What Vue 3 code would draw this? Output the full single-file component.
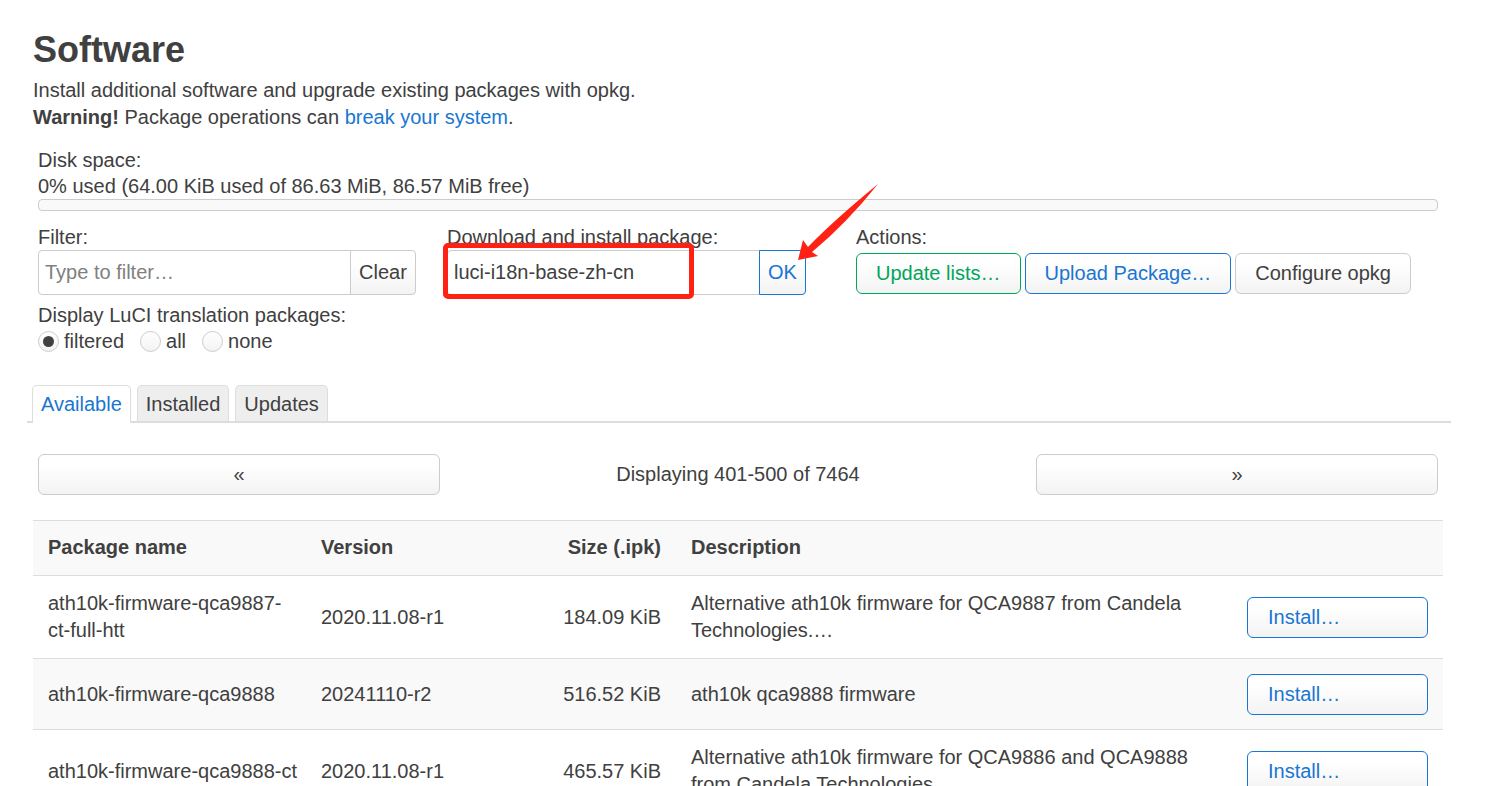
<script setup>
import { ref } from 'vue'

const filter = ref('')
const pkg = ref('luci-i18n-base-zh-cn')
const translations = ref('filtered')
const translationModes = ['filtered', 'all', 'none']
const tabs = ['Available', 'Installed', 'Updates']
const activeTab = ref('Available')

const packages = [
  {
    name: 'ath10k-firmware-qca9887-ct-full-htt',
    version: '2020.11.08-r1',
    size: '184.09 KiB',
    description: 'Alternative ath10k firmware for QCA9887 from Candela Technologies.…',
  },
  {
    name: 'ath10k-firmware-qca9888',
    version: '20241110-r2',
    size: '516.52 KiB',
    description: 'ath10k qca9888 firmware',
  },
  {
    name: 'ath10k-firmware-qca9888-ct',
    version: '2020.11.08-r1',
    size: '465.57 KiB',
    description: 'Alternative ath10k firmware for QCA9886 and QCA9888 from Candela Technologies.…',
  },
]
</script>

<template>
  <main class="page">
    <h2>Software</h2>
    <p class="intro">
      Install additional software and upgrade existing packages with opkg.<br />
      <strong>Warning!</strong> Package operations can <a href="#">break your system</a>.
    </p>

    <section class="controls">
      <div class="disk">
        <div>Disk space:</div>
        <div>0% used (64.00 KiB used of 86.63 MiB, 86.57 MiB free)</div>
        <div class="bar" role="progressbar" aria-label="Disk space" aria-valuenow="0"></div>
      </div>

      <div class="fields">
        <div class="field">
          <label class="label" for="filter">Filter:</label>
          <div class="group">
            <input id="filter" v-model="filter" type="text" placeholder="Type to filter…" />
            <button type="button" class="btn" @click="filter = ''">Clear</button>
          </div>
        </div>
        <div class="field">
          <label class="label" for="package">Download and install package:</label>
          <div class="group">
            <input id="package" v-model="pkg" type="text" />
            <button type="button" class="btn blue">OK</button>
            <div class="highlight"></div>
            <svg class="arrow" width="90" height="84" viewBox="792 180 90 84" aria-hidden="true">
              <path d="M798 260L803 240L808 247Q833 221 878 184Q846 224 812 252L818 256Z" />
            </svg>
          </div>
        </div>
        <div class="field">
          <div class="label">Actions:</div>
          <div class="actions">
            <button type="button" class="btn green">Update lists…</button>
            <button type="button" class="btn blue">Upload Package…</button>
            <button type="button" class="btn">Configure opkg</button>
          </div>
        </div>
      </div>

      <fieldset class="translations">
        <legend class="label">Display LuCI translation packages:</legend>
        <div class="radios">
          <label v-for="mode in translationModes" :key="mode">
            <input v-model="translations" type="radio" name="translations" :value="mode" />
            {{ mode }}
          </label>
        </div>
      </fieldset>
    </section>

    <nav class="tabs">
      <a
        v-for="tab in tabs"
        :key="tab"
        href="#"
        :class="{ active: tab === activeTab }"
        @click.prevent="activeTab = tab"
      >{{ tab }}</a>
    </nav>

    <div class="pager">
      <button type="button" class="btn" aria-label="Previous page">«</button>
      <div>Displaying 401-500 of 7464</div>
      <button type="button" class="btn" aria-label="Next page">»</button>
    </div>

    <table>
      <colgroup>
        <col class="c-name" />
        <col class="c-version" />
        <col class="c-size" />
        <col />
        <col class="c-action" />
      </colgroup>
      <thead>
        <tr>
          <th>Package name</th>
          <th>Version</th>
          <th class="size">Size (.ipk)</th>
          <th>Description</th>
          <th></th>
        </tr>
      </thead>
      <tbody>
        <tr v-for="row in packages" :key="row.name">
          <td class="name">{{ row.name }}</td>
          <td>{{ row.version }}</td>
          <td class="size">{{ row.size }}</td>
          <td>{{ row.description }}</td>
          <td class="action"><button type="button" class="btn blue">Install…</button></td>
        </tr>
      </tbody>
    </table>
  </main>
</template>

<style>
body {
  background: #fff;
}
</style>

<style scoped>
.page {
  box-sizing: border-box;
  padding: 23px 48px 0 33px;
  color: #404040;
  font: 20px/27px "Liberation Sans", Arial, sans-serif;
}
.page *,
.page *::before {
  box-sizing: border-box;
}
h2 {
  margin: 0;
  font-size: 36px;
  line-height: 54px;
}
p {
  margin: 0;
}
a {
  color: #1976d2;
  text-decoration: none;
}
.controls {
  padding: 16px 5px 0;
}
.disk {
  line-height: 26px;
}
.label {
  display: block;
  padding: 0;
  line-height: 25px;
}
.bar {
  height: 12px;
  border: 1px solid #ccc;
  border-radius: 4px;
  background: #f9f9f9;
}
.fields {
  display: grid;
  grid-template-columns: 409fr 409fr 582fr;
  margin-top: 14px;
}
.group {
  position: relative;
  display: flex;
  height: 45px;
}
input[type='text'] {
  width: 313px;
  min-width: 0;
  margin: 0;
  padding: 0 6px;
  border: 1px solid #ccc;
  border-radius: 4px 0 0 4px;
  background: #fff;
  color: #404040;
  font: inherit;
}
input::placeholder {
  color: #808080;
  opacity: 1;
}
.btn {
  height: 41px;
  margin: 0;
  padding: 0 19px;
  border: 1px solid #ccc;
  border-radius: 6px;
  background: linear-gradient(#fff 25%, #f3f3f3);
  color: #404040;
  font: inherit;
  white-space: nowrap;
}
.blue {
  border-color: #1976d2;
  color: #1976d2;
}
.green {
  border-color: #00a65a;
  color: #00a65a;
}
.group .btn {
  height: 45px;
  margin-left: -1px;
  padding: 0 8px;
  border-radius: 0 4px 4px 0;
}
.actions {
  display: flex;
  gap: 4px;
  padding-top: 3px;
}
.highlight {
  position: absolute;
  top: -7px;
  left: -4px;
  width: 251px;
  height: 56px;
  border: 5px solid #ff2114;
  border-radius: 5px;
}
.arrow {
  position: absolute;
  top: -70px;
  left: 345px;
  fill: #ff2114;
}
.translations {
  min-width: 0;
  margin: 8px 0 0;
  padding: 0;
  border: 0;
}
.radios {
  display: flex;
  gap: 16px;
  line-height: 26px;
}
.radios label {
  display: flex;
  align-items: center;
  gap: 5px;
}
input[type='radio'] {
  appearance: none;
  display: grid;
  place-items: center;
  width: 21px;
  height: 21px;
  margin: 0;
  border: 1px solid #ccc;
  border-radius: 50%;
  background: linear-gradient(#fff, #f3f3f3);
}
input[type='radio']:checked::before {
  content: '';
  width: 11px;
  height: 11px;
  border-radius: 50%;
  background: #404040;
}
.tabs {
  display: flex;
  gap: 6px;
  margin: 31px -8px 0 -6px;
  padding-left: 5px;
  border-bottom: 2px solid #ddd;
}
.tabs a {
  height: 36px;
  padding: 0 8px;
  border: 1px solid #ddd;
  border-bottom: 0;
  border-radius: 5px 5px 0 0;
  background: #eee;
  color: #404040;
  line-height: 36px;
}
.tabs .active {
  height: 38px;
  margin-bottom: -2px;
  background: #fff;
  color: #1976d2;
}
.pager {
  display: grid;
  grid-template-columns: 402fr 596fr 402fr;
  align-items: center;
  margin: 31px 5px 25px;
  text-align: center;
}
table {
  width: 100%;
  border-collapse: separate;
  border-spacing: 0;
  table-layout: fixed;
}
.c-name {
  width: 273px;
}
.c-version {
  width: 180px;
}
.c-size {
  width: 190px;
}
.c-action {
  width: 211px;
}
th,
td {
  padding: 14px 15px;
  border-top: 1px solid #ddd;
  text-align: left;
  vertical-align: middle;
}
th {
  padding-top: 13px;
}
th,
tbody tr:nth-child(even) td {
  background: #f9f9f9;
}
.size {
  text-align: right;
}
td.name {
  padding-right: 5px;
}
td.action {
  padding: 15px 15px 14px;
}
.action .btn {
  display: block;
  width: 100%;
  padding: 0 20px;
  text-align: left;
}
</style>
